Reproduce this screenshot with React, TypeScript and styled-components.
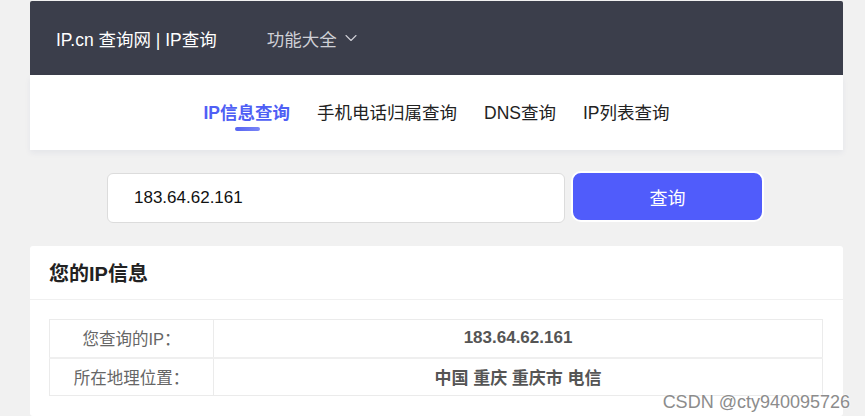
import styled, { createGlobalStyle } from 'styled-components';
import { ChevronDown } from 'lucide-react';

const GlobalStyle = createGlobalStyle`
  html, body {
    margin: 0;
    padding: 0;
    background: #f1f1f1;
    font-family: "Liberation Sans", "Noto Sans CJK SC", sans-serif;
  }
`;

const Page = styled.div`
  position: relative;
  width: 865px;
  height: 416px;
  overflow: hidden;
  padding-top: 1px;
  box-sizing: border-box;
`;

const Container = styled.div`
  width: 813px;
  margin-left: 30px;
  display: flex;
  flex-direction: column;
`;

const Header = styled.header`
  height: 74px;
  background: #3b3e4b;
  border-radius: 2px 2px 0 0;
  display: flex;
  align-items: center;
  padding-left: 26px;
  gap: 50px;
`;

const Logo = styled.div`
  color: #ffffff;
  font-size: 17.5px;
  white-space: pre;
`;

const Menu = styled.div`
  display: flex;
  align-items: center;
  gap: 4px;
  color: #cfd0d6;
  font-size: 17.5px;
`;

const Nav = styled.nav`
  height: 75px;
  background: #ffffff;
  display: flex;
  justify-content: center;
  align-items: center;
  gap: 27px;
  box-shadow: 0 3px 6px rgba(40, 50, 120, 0.06);
`;

const NavItem = styled.div<{ $active?: boolean }>`
  position: relative;
  font-size: 17.5px;
  color: ${(p) => (p.$active ? '#4f5ff5' : '#222')};
  font-weight: ${(p) => (p.$active ? 700 : 400)};
  margin-top: -3px;

  &::after {
    content: '';
    display: ${(p) => (p.$active ? 'block' : 'none')};
    position: absolute;
    left: 50%;
    bottom: -7px;
    width: 25px;
    height: 4px;
    margin-left: -12px;
    border-radius: 2px;
    background: linear-gradient(90deg, #5664f2, #7b86f6);
  }
`;

const SearchRow = styled.form`
  display: flex;
  justify-content: center;
  align-items: center;
  gap: 6px;
  margin-top: 23px;
  padding-right: 2px;
`;

const Input = styled.input`
  width: 458px;
  height: 50px;
  box-sizing: border-box;
  border: 1px solid #dcdcdc;
  border-radius: 6px;
  background: #fff;
  padding: 0 26px;
  font-family: "Liberation Sans", "Noto Sans CJK SC", sans-serif;
  font-size: 17px;
  color: #111;
  outline: none;
`;

const Button = styled.button`
  width: 193px;
  height: 51px;
  box-sizing: border-box;
  border: 2px solid #fff;
  border-radius: 10px;
  background: #505cfb;
  color: #fff;
  font-family: "Noto Sans CJK SC", sans-serif;
  font-size: 18px;
  margin-top: -3px;
  cursor: pointer;
`;

const Card = styled.section`
  margin-top: 23px;
  background: #fff;
  border-radius: 3px;
  padding-bottom: 20px;
`;

const CardTitle = styled.h2`
  margin: 0;
  height: 53px;
  display: flex;
  align-items: center;
  padding-left: 19px;
  font-size: 20px;
  font-weight: 700;
  color: #222;
  border-bottom: 1px solid #f0f0f0;
`;

const Table = styled.table`
  margin: 19px 20px 0 19px;
  width: calc(100% - 39px);
  border-collapse: collapse;
  border: 1px solid #ebebeb;
`;

const Row = styled.tr`
  height: 38px;
  & + & td {
    border-top: 2px solid #efefef;
  }
`;

const Label = styled.td`
  width: 163px;
  text-align: center;
  font-size: 16.5px;
  color: #666;
  border-right: 1px solid #ebebeb;
  padding: 0;
`;

const Value = styled.td`
  text-align: center;
  font-size: 17px;
  font-weight: 700;
  color: #555;
  padding: 0;
`;

const Watermark = styled.div`
  position: absolute;
  right: 15px;
  bottom: 3px;
  font-size: 18px;
  color: #8c8c8c;
  text-shadow: 0 0 2px #fff, 0 0 2px #fff;
`;

const navItems = ['IP信息查询', '手机电话归属查询', 'DNS查询', 'IP列表查询'];

const rows = [
  { label: '您查询的IP：', value: '183.64.62.161' },
  { label: '所在地理位置：', value: '中国 重庆 重庆市 电信' },
];

export default function App() {
  return (
    <Page>
      <GlobalStyle />
      <Container>
        <Header>
          <Logo>IP.cn 查询网 | IP查询</Logo>
          <Menu>
            功能大全
            <ChevronDown size={20} strokeWidth={1.3} />
          </Menu>
        </Header>
        <Nav>
          {navItems.map((item, i) => (
            <NavItem key={item} $active={i === 0}>
              {item}
            </NavItem>
          ))}
        </Nav>
        <SearchRow onSubmit={(e) => e.preventDefault()}>
          <Input defaultValue="183.64.62.161" />
          <Button type="submit">查询</Button>
        </SearchRow>
        <Card>
          <CardTitle>您的IP信息</CardTitle>
          <Table>
            <tbody>
              {rows.map((r) => (
                <Row key={r.label}>
                  <Label>{r.label}</Label>
                  <Value>{r.value}</Value>
                </Row>
              ))}
            </tbody>
          </Table>
        </Card>
      </Container>
      <Watermark>CSDN @cty940095726</Watermark>
    </Page>
  );
}
